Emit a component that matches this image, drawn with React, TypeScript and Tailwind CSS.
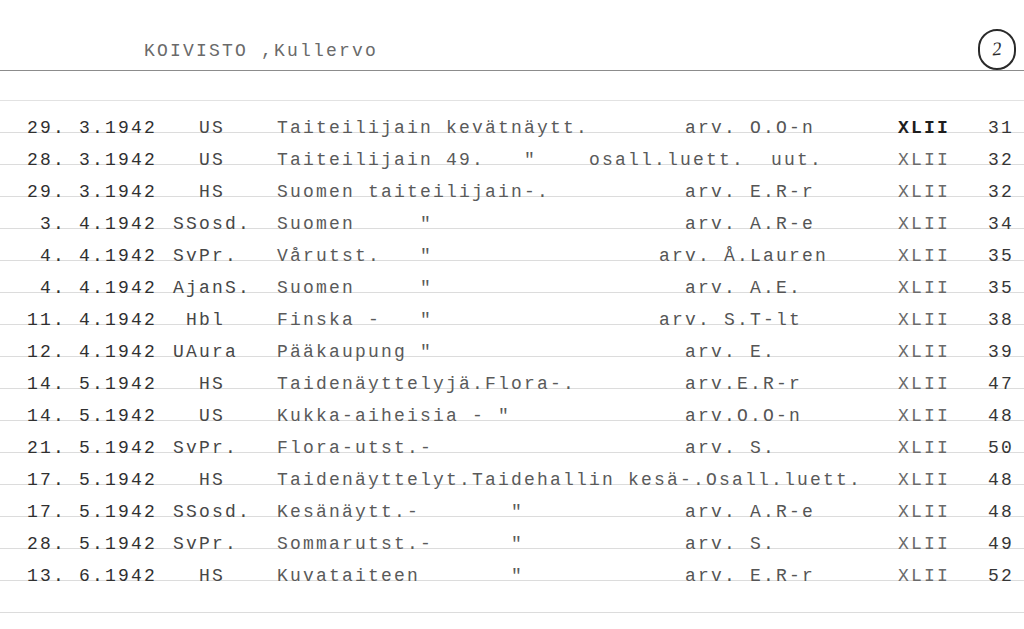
import React from 'react';

interface CardRow {
  date: string;
  source: string;
  title: string;
  reviewer: string;
  volume: string;
  page: string;
  bold?: boolean;
}

// Ledger entries, padded with spaces so the typewriter columns line up
const rows: CardRow[] = [
  { date: '29. 3.1942', source: '  US', title: 'Taiteilijain kevätnäytt.', reviewer: '  arv. O.O-n', volume: 'XLII', page: '31', bold: true },
  { date: '28. 3.1942', source: '  US', title: 'Taiteilijain 49.   "    osall.luett.  uut.', reviewer: '', volume: 'XLII', page: '32' },
  { date: '29. 3.1942', source: '  HS', title: 'Suomen taiteilijain-.', reviewer: '  arv. E.R-r', volume: 'XLII', page: '32' },
  { date: ' 3. 4.1942', source: 'SSosd.', title: 'Suomen     "', reviewer: '  arv. A.R-e', volume: 'XLII', page: '34' },
  { date: ' 4. 4.1942', source: 'SvPr.', title: 'Vårutst.   "', reviewer: 'arv. Å.Lauren', volume: 'XLII', page: '35' },
  { date: ' 4. 4.1942', source: 'AjanS.', title: 'Suomen     "', reviewer: '  arv. A.E.', volume: 'XLII', page: '35' },
  { date: '11. 4.1942', source: ' Hbl', title: 'Finska -   "', reviewer: 'arv. S.T-lt', volume: 'XLII', page: '38' },
  { date: '12. 4.1942', source: 'UAura', title: 'Pääkaupung "', reviewer: '  arv. E.', volume: 'XLII', page: '39' },
  { date: '14. 5.1942', source: '  HS', title: 'Taidenäyttelyjä.Flora-.', reviewer: '  arv.E.R-r', volume: 'XLII', page: '47' },
  { date: '14. 5.1942', source: '  US', title: 'Kukka-aiheisia - "', reviewer: '  arv.O.O-n', volume: 'XLII', page: '48' },
  { date: '21. 5.1942', source: 'SvPr.', title: 'Flora-utst.-', reviewer: '  arv. S.', volume: 'XLII', page: '50' },
  { date: '17. 5.1942', source: '  HS', title: 'Taidenäyttelyt.Taidehallin kesä-.Osall.luett.', reviewer: '', volume: 'XLII', page: '48' },
  { date: '17. 5.1942', source: 'SSosd.', title: 'Kesänäytt.-       "', reviewer: '  arv. A.R-e', volume: 'XLII', page: '48' },
  { date: '28. 5.1942', source: 'SvPr.', title: 'Sommarutst.-      "', reviewer: '  arv. S.', volume: 'XLII', page: '49' },
  { date: '13. 6.1942', source: '  HS', title: 'Kuvataiteen       "', reviewer: '  arv. E.R-r', volume: 'XLII', page: '52' },
];

export default function App() {
  return (
    <div className="w-[1024px] h-[629px] overflow-hidden bg-white font-['Liberation_Mono',monospace] text-[18px] tracking-[2.2px] whitespace-pre">
      {/* Card heading */}
      <header className="flex items-end h-[71px] border-b-[1.5px] border-[#8c8c8c]">
        <span className="ml-[144px] mb-[13px] leading-[12px] text-[#6a6a6a]">KOIVISTO ,Kullervo</span>
        <div className="ml-auto mr-[8px] w-[38px] h-[41px] rounded-full border-2 border-[#2a2a2a] flex items-center justify-center">
          <span className="font-['Liberation_Serif',serif] italic text-[19px] tracking-normal text-[#2a2a2a] -rotate-6">2</span>
        </div>
      </header>

      <div className="mt-[29px] border-t border-[#e2e2e2]">
        {rows.map((row, i) => (
          <div key={i} className="flex items-end h-[32px] border-b border-[#dcdcdc] leading-[8px]">
            <span className="ml-[27px] w-[146px] text-[#303030]">{row.date}</span>
            <span className="w-[104px] text-[#474747]">{row.source}</span>
            <span className="w-[382px] text-[#5a5a5a]">{row.title}</span>
            <span className="w-[239px] text-[#555]">{row.reviewer}</span>
            <span className={row.bold ? 'w-[90px] font-bold text-[#1e1e1e]' : 'w-[90px] text-[#6a6a6a]'}>{row.volume}</span>
            <span className="text-[#363636]">{row.page}</span>
          </div>
        ))}
        {/* blank ruled line at the foot of the card */}
        <div className="h-[32px] border-b border-[#dcdcdc]" />
      </div>
    </div>
  );
}
